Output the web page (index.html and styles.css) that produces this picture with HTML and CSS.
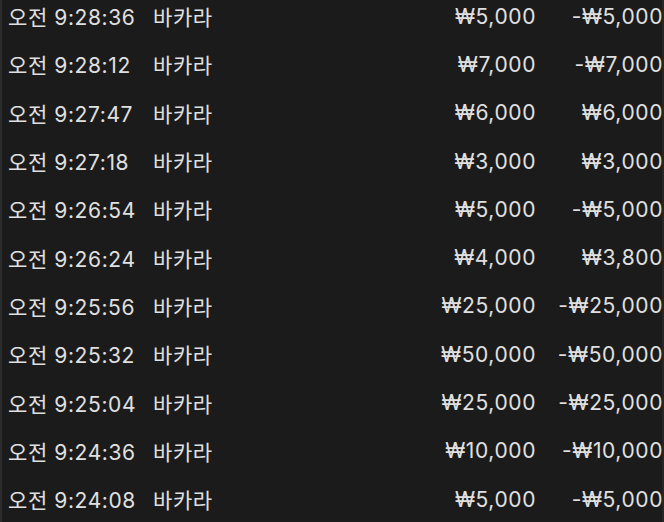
FILE: index.html
```html
<!DOCTYPE html>
<html lang="ko">
<head>
<meta charset="utf-8">
<link rel="stylesheet" href="styles.css">
</head>
<body>
<div class="list">
  <div class="row"><span class="time">오전 9:28:36</span><span class="game">바카라</span><span class="bet">₩5,000</span><span class="result">-₩5,000</span></div>
  <div class="row"><span class="time">오전 9:28:12</span><span class="game">바카라</span><span class="bet">₩7,000</span><span class="result">-₩7,000</span></div>
  <div class="row"><span class="time">오전 9:27:47</span><span class="game">바카라</span><span class="bet">₩6,000</span><span class="result">₩6,000</span></div>
  <div class="row"><span class="time">오전 9:27:18</span><span class="game">바카라</span><span class="bet">₩3,000</span><span class="result">₩3,000</span></div>
  <div class="row"><span class="time">오전 9:26:54</span><span class="game">바카라</span><span class="bet">₩5,000</span><span class="result">-₩5,000</span></div>
  <div class="row"><span class="time">오전 9:26:24</span><span class="game">바카라</span><span class="bet">₩4,000</span><span class="result">₩3,800</span></div>
  <div class="row"><span class="time">오전 9:25:56</span><span class="game">바카라</span><span class="bet">₩25,000</span><span class="result">-₩25,000</span></div>
  <div class="row"><span class="time">오전 9:25:32</span><span class="game">바카라</span><span class="bet">₩50,000</span><span class="result">-₩50,000</span></div>
  <div class="row"><span class="time">오전 9:25:04</span><span class="game">바카라</span><span class="bet">₩25,000</span><span class="result">-₩25,000</span></div>
  <div class="row"><span class="time">오전 9:24:36</span><span class="game">바카라</span><span class="bet">₩10,000</span><span class="result">-₩10,000</span></div>
  <div class="row"><span class="time">오전 9:24:08</span><span class="game">바카라</span><span class="bet">₩5,000</span><span class="result">-₩5,000</span></div>
</div>
</body>
</html>
```
FILE: styles.css
```css
html, body {
  margin: 0;
  padding: 0;
  background: #1b1b1b;
  overflow: hidden;
}
body {
  width: 664px;
  height: 522px;
  font-family: Inter, "Noto Sans CJK KR", sans-serif;
  color: #e0e0e0;
  font-size: 21px;
  letter-spacing: 0.6px;
}
.list {
  height: 522px;
  border-left: 2px solid #2c2c2c;
  border-right: 2px solid #262626;
  box-sizing: border-box;
  overflow: hidden;
}
.row {
  display: grid;
  grid-template-columns: 145px 1fr 120px 126px;
  align-items: center;
  height: 48.3px;
  padding-left: 6px;
  margin: 0;
}
.row:first-child {
  margin-top: -8px;
}
.time, .game {
  white-space: nowrap;
}
.bet, .result {
  text-align: right;
  white-space: nowrap;
}
.result {
  margin-right: -1px;
}
```
